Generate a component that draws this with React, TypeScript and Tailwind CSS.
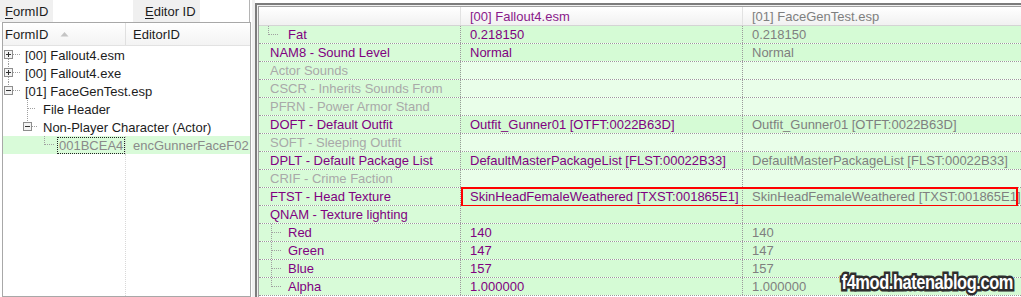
import React from 'react';

type Row = {
  label: string;
  v1?: string;
  v2?: string;
  on: boolean;
  tree?: 'tee' | 'elbow';
  mark?: boolean;
};

const rows: Row[] = [
  { label: 'Fat', v1: '0.218150', v2: '0.218150', on: true, tree: 'elbow' },
  { label: 'NAM8 - Sound Level', v1: 'Normal', v2: 'Normal', on: true },
  { label: 'Actor Sounds', on: false },
  { label: 'CSCR - Inherits Sounds From', on: false },
  { label: 'PFRN - Power Armor Stand', on: false },
  { label: 'DOFT - Default Outfit', v1: 'Outfit_Gunner01 [OTFT:0022B63D]', v2: 'Outfit_Gunner01 [OTFT:0022B63D]', on: true },
  { label: 'SOFT - Sleeping Outfit', on: false },
  { label: 'DPLT - Default Package List', v1: 'DefaultMasterPackageList [FLST:00022B33]', v2: 'DefaultMasterPackageList [FLST:00022B33]', on: true },
  { label: 'CRIF - Crime Faction', on: false },
  { label: 'FTST - Head Texture', v1: 'SkinHeadFemaleWeathered [TXST:001865E1]', v2: 'SkinHeadFemaleWeathered [TXST:001865E1]', on: true, mark: true },
  { label: 'QNAM - Texture lighting', v1: '', v2: '', on: true },
  { label: 'Red', v1: '140', v2: '140', on: true, tree: 'tee' },
  { label: 'Green', v1: '147', v2: '147', on: true, tree: 'tee' },
  { label: 'Blue', v1: '157', v2: '157', on: true, tree: 'tee' },
  { label: 'Alpha', v1: '1.000000', v2: '1.000000', on: true, tree: 'elbow' },
];

const dot = { stroke: '#a0a0a0', strokeWidth: 1, strokeDasharray: '1 1' };

function Expander({ x, open }: { x: number; open: boolean }) {
  return (
    <g>
      <rect x={x + 0.5} y={4.5} width={8} height={8} fill="#f4f4f4" stroke="#8e8e8e" />
      <line x1={x + 2} y1={8.5} x2={x + 7} y2={8.5} stroke="#333" />
      {!open && <line x1={x + 4.5} y1={6} x2={x + 4.5} y2={11} stroke="#333" />}
    </g>
  );
}

function TreeRow({
  w,
  children,
  text,
  className = '',
}: {
  w: number;
  children: React.ReactNode;
  text: string;
  className?: string;
}) {
  return (
    <div className={`flex h-[18px] items-center ${className}`}>
      <svg width={w} height={18} className="shrink-0">
        {children}
      </svg>
      <span className="whitespace-nowrap text-[#1c1c1c]">{text}</span>
    </div>
  );
}

function DataRow({ r }: { r: Row }) {
  const cellBg = r.on ? 'bg-[#d5fbd5]' : 'bg-[#e9fee9]';
  const vx = r.label === 'Fat' ? 9.5 : 12.5;
  return (
    <div className="flex h-[18px] border-b border-dotted border-[#9a9a9a]">
      <div className="flex w-[202px] shrink-0 items-center border-r border-dotted border-[#9a9a9a] bg-[#d8fbd8]">
        {r.tree ? (
          <svg width={29} height={17} className="shrink-0">
            <line x1={vx} y1={0} x2={vx} y2={r.tree === 'tee' ? 17 : 9} {...dot} />
            <line x1={vx + 0.5} y1={8.5} x2={vx + 9.5} y2={8.5} {...dot} />
          </svg>
        ) : (
          <span className="w-[11px] shrink-0" />
        )}
        <span className={`whitespace-nowrap ${r.on ? 'text-[#800080]' : 'text-[#a9a9a9]'}`}>{r.label}</span>
      </div>
      <div className="relative flex flex-1">
        <div className={`flex w-[282px] shrink-0 items-center border-r border-dotted border-[#9a9a9a] pl-[9px] text-[#800080] ${cellBg}`}>
          <span className="whitespace-nowrap">{r.v1}</span>
        </div>
        <div className={`flex flex-1 items-center overflow-hidden pl-[9px] text-[#7f7f7f] ${cellBg}`}>
          <span className="whitespace-nowrap">{r.v2}</span>
        </div>
        {r.mark && (
          <div className="pointer-events-none absolute -top-[1px] -bottom-[2px] left-0 right-[3px] border-2 border-[#ff0000]" />
        )}
      </div>
    </div>
  );
}

export default function App() {
  return (
    <div className="relative flex h-[297px] w-[1021px] overflow-hidden bg-white font-['Liberation_Sans',Arial,sans-serif] text-[13px] leading-none">
      {/* left: record tree */}
      <div className="flex w-[252px] shrink-0 flex-col">
        <div className="flex h-[22px] shrink-0 items-center">
          <div className="flex h-full w-[53px] items-center bg-[#f0f0f0] pl-[5px] text-[#1c1c1c]">
            <span className="underline underline-offset-2">F</span>ormID
          </div>
          <div className="h-full w-[80px] bg-white" />
          <div className="flex h-full w-[67px] items-center bg-[#f0f0f0] pl-[12px] text-[#1c1c1c]">
            <span className="underline underline-offset-2">E</span>ditor ID
          </div>
          <div className="h-full w-[50px] border-r border-[#b4b4b4] bg-white" />
        </div>
        <div className="ml-[2px] flex w-[249px] flex-1 flex-col border border-[#a8a8a8]">
          <div className="flex h-[23px] shrink-0 items-stretch border-b border-[#e2e2e2] bg-gradient-to-b from-white to-[#f3f3f3]">
            <div className="flex w-[123px] items-center border-r border-[#e0e0e0] pl-[2px] text-[#1c1c1c]">
              FormID
              <svg width={9} height={6} className="ml-[12px]">
                <path d="M0.5 5.5 L4.5 1 L8.5 5.5 Z" fill="#c4c4c4" />
              </svg>
            </div>
            <div className="flex items-center pl-[7px] text-[#1c1c1c]">EditorID</div>
          </div>
          <TreeRow w={22} text="[00] Fallout4.esm">
            <line x1={5.5} y1={13} x2={5.5} y2={18} {...dot} />
            <line x1={10} y1={8.5} x2={18} y2={8.5} {...dot} />
            <Expander x={1} open={false} />
          </TreeRow>
          <TreeRow w={22} text="[00] Fallout4.exe">
            <line x1={5.5} y1={0} x2={5.5} y2={4} {...dot} />
            <line x1={5.5} y1={13} x2={5.5} y2={18} {...dot} />
            <line x1={10} y1={8.5} x2={18} y2={8.5} {...dot} />
            <Expander x={1} open={false} />
          </TreeRow>
          <TreeRow w={22} text="[01] FaceGenTest.esp">
            <line x1={5.5} y1={0} x2={5.5} y2={4} {...dot} />
            <line x1={10} y1={8.5} x2={18} y2={8.5} {...dot} />
            <line x1={24.5} y1={14} x2={24.5} y2={18} {...dot} />
            <Expander x={1} open={true} />
          </TreeRow>
          <TreeRow w={40} text="File Header">
            <line x1={24.5} y1={0} x2={24.5} y2={18} {...dot} />
            <line x1={25} y1={8.5} x2={33} y2={8.5} {...dot} />
          </TreeRow>
          <TreeRow w={40} text="Non-Player Character (Actor)">
            <line x1={24.5} y1={0} x2={24.5} y2={4} {...dot} />
            <line x1={29} y1={8.5} x2={34} y2={8.5} {...dot} />
            <line x1={41.5} y1={14} x2={41.5} y2={18} {...dot} />
            <Expander x={20} open={true} />
          </TreeRow>
          <div className="flex h-[18px] bg-[#d9fbd9]">
            <div className="flex w-[123px] shrink-0 items-center border-r border-dotted border-[#cfcfcf]">
              <svg width={54} height={18} className="shrink-0">
                <line x1={41.5} y1={0} x2={41.5} y2={9} {...dot} />
                <line x1={42} y1={8.5} x2={51} y2={8.5} {...dot} />
              </svg>
              <span className="flex h-[17px] items-center border border-dotted border-[#222] px-[1px] text-[#8a8a8a]">001BCEA4</span>
            </div>
            <div className="flex items-center pl-[7px] text-[#8a8a8a]">encGunnerFaceF02</div>
          </div>
          <div className="flex flex-1">
            <div className="w-[123px] border-r border-dotted border-[#d8d8d8]" />
          </div>
        </div>
      </div>

      {/* splitter */}
      <div className="w-[3px] shrink-0 bg-[#f0f0f0]" />

      {/* right: record view */}
      <div className="mt-[3px] flex flex-1 flex-col border-l-2 border-t-2 border-[#7c7c7c] bg-[#f0f0f0]">
        <div className="ml-[1px] mt-[1px] flex flex-1 flex-col border-l border-t border-[#a0a0a0] bg-white">
          <div className="flex h-[19px] shrink-0 border-b border-[#d4d4d4] bg-gradient-to-b from-white to-[#f1f1f1]">
            <div className="w-[202px] shrink-0 border-r border-[#e2e2e2]" />
            <div className="flex w-[282px] shrink-0 items-center border-r border-[#e2e2e2] pl-[9px] text-[#8a1a8a]">
              [00] Fallout4.esm
            </div>
            <div className="flex flex-1 items-center pl-[9px] text-[#7f7f7f]">[01] FaceGenTest.esp</div>
          </div>
          {rows.map((r, i) => (
            <DataRow key={i} r={r} />
          ))}
        </div>
      </div>

      {/* watermark */}
      <div className="pointer-events-none absolute bottom-[5px] right-[8px] origin-right scale-x-[0.82] font-['Liberation_Sans',sans-serif] text-[20px] font-bold tracking-[-0.5px] text-white [-webkit-text-stroke:5px_#2e2e2e] [paint-order:stroke_fill]">
        f4mod.hatenablog.com
      </div>
    </div>
  );
}
